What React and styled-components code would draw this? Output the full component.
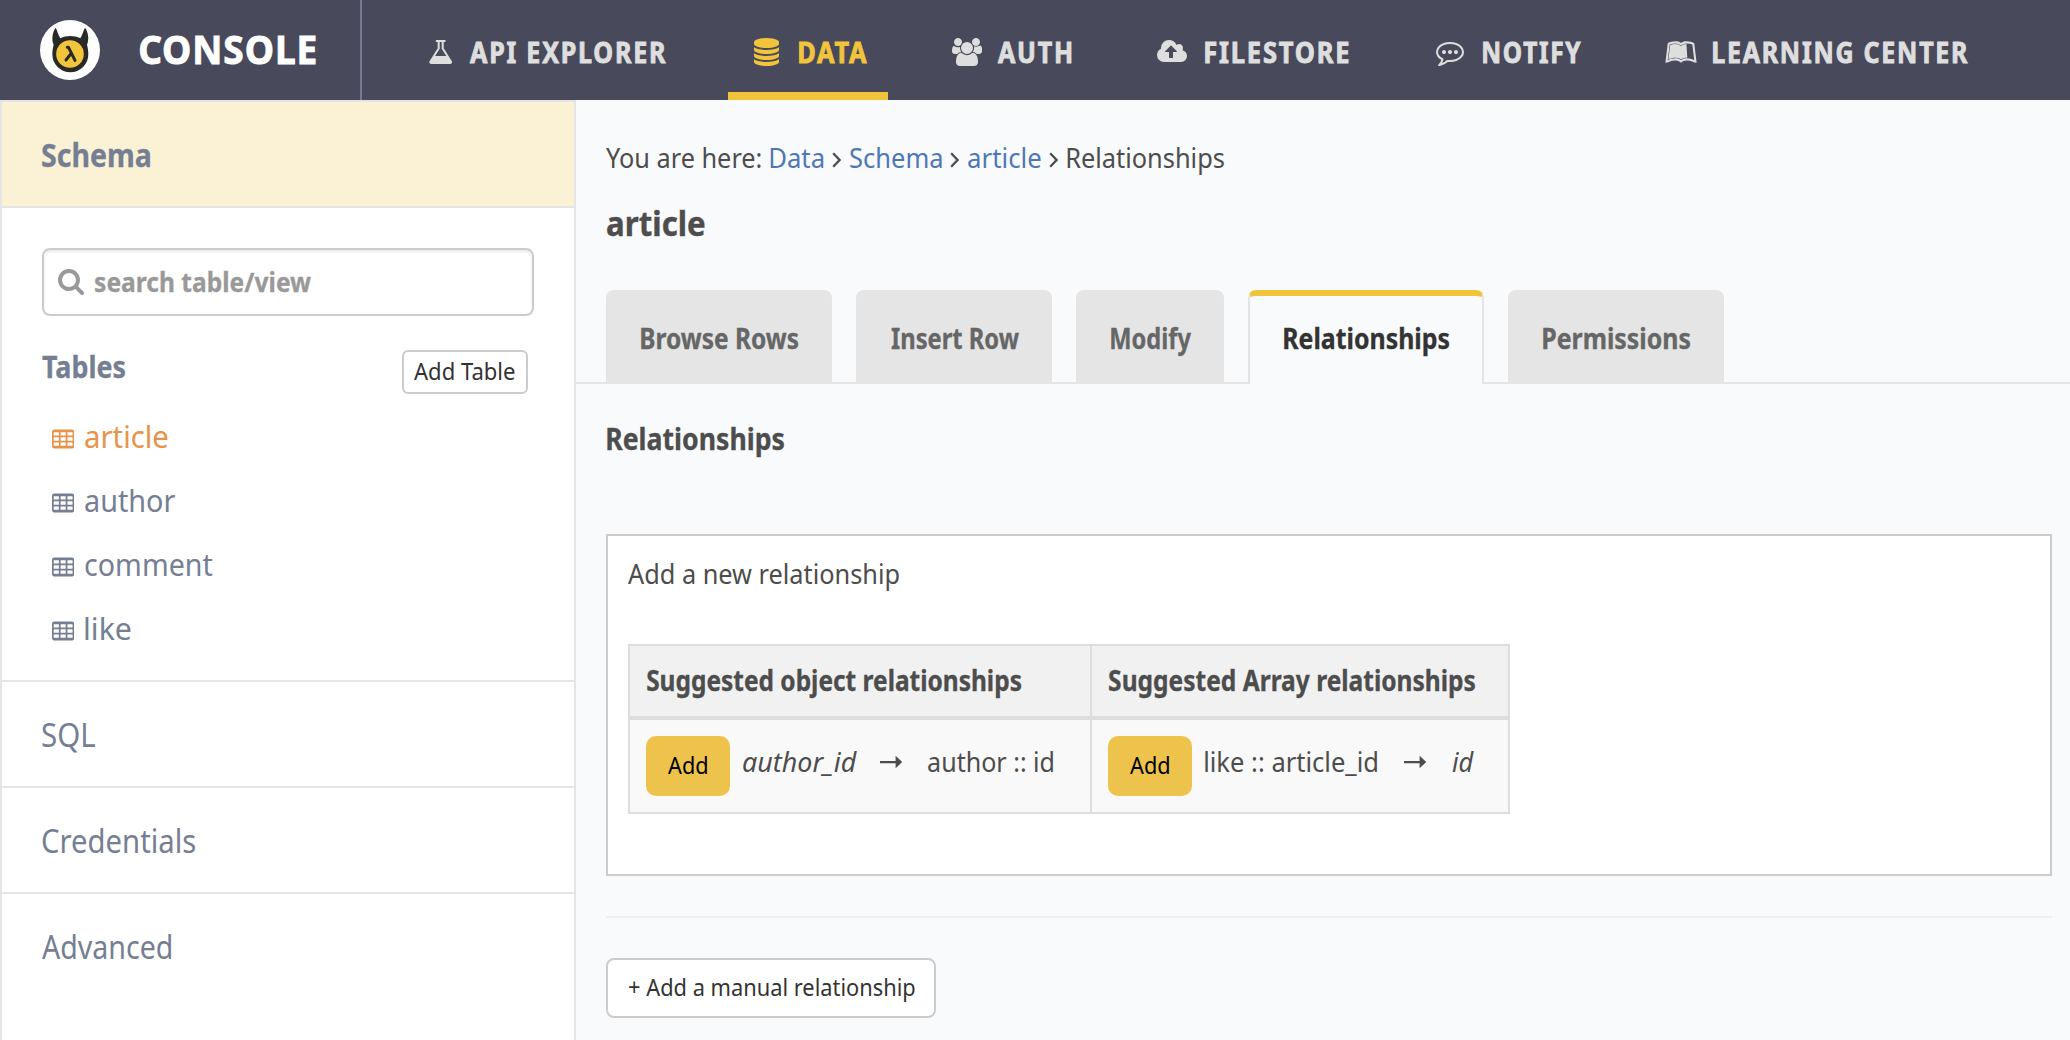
import React, { useLayoutEffect, useState } from "react";
import styled, { createGlobalStyle } from "styled-components";
import { FaLeanpub } from "react-icons/fa";

const FONT = '"Noto Sans", "Open Sans", sans-serif';

const GlobalStyle = createGlobalStyle`
  *, *::before, *::after { box-sizing: border-box; }
  html, body { margin: 0; padding: 0; }
  body {
    font-family: ${FONT};
    background: #f9fafc;
    color: #4d4d4d;
    overflow: hidden;
  }
`;

/* ---------- condensed text ---------- */

const FitBox = styled.span`
  display: block;
  flex: none;
  white-space: nowrap;
  font-size: ${(p) => p.$size}px;
  line-height: ${(p) => p.$line || 40}px;
  font-weight: ${(p) => (p.$bold ? 700 : 400)};
  font-style: ${(p) => (p.$italic ? "italic" : "normal")};
  letter-spacing: ${(p) => p.$spacing || 0}px;
  -webkit-text-stroke: ${(p) => p.$heavy || 0}px currentColor;
`;

const FitInner = styled.span`
  display: block;
  width: max-content;
  transform-origin: 0 50%;
`;

/* Squeezes a line of text so that its ink fills exactly `width` pixels. */
function Fit({ width, size = 28, line, bold, italic, heavy, spacing = 0, children }) {
  const [fit, setFit] = useState({ scale: 1, shift: 0 });
  useLayoutEffect(() => {
    const ctx = document.createElement("canvas").getContext("2d");
    ctx.font = `${italic ? "italic " : ""}${bold ? 700 : 400} ${size}px ${FONT}`;
    const m = ctx.measureText(children);
    const ink =
      m.actualBoundingBoxRight + m.actualBoundingBoxLeft + spacing * (children.length - 1);
    const scale = width / ink;
    setFit({ scale, shift: m.actualBoundingBoxLeft * scale });
  }, [width, size, bold, italic, spacing, children]);
  return (
    <FitBox
      $size={size}
      $line={line}
      $bold={bold}
      $italic={italic}
      $heavy={heavy}
      $spacing={spacing}
      style={{ width }}
    >
      <FitInner style={{ transform: `translateX(${fit.shift}px) scaleX(${fit.scale})` }}>
        {children}
      </FitInner>
    </FitBox>
  );
}

/* ---------- icons ---------- */

const Glyph = styled.svg`
  display: block;
  flex: none;
  fill: currentColor;
`;

const FlaskIcon = () => (
  <Glyph width="23.4" height="28" viewBox="148 0 1496 1792">
    <path d="M1591 1448q56 89 21.5 152.5t-140.5 63.5h-1152q-106 0-140.5-63.5t21.5-152.5l503-793v-399h-64q-26 0-45-19t-19-45 19-45 45-19h512q26 0 45 19t19 45-19 45-45 19h-64v399zm-779-725l-272 429h712l-272-429-20-31v-436h-128v436z" />
  </Glyph>
);

const DatabaseIcon = () => (
  <Glyph width="25" height="28" viewBox="128 0 1536 1792" preserveAspectRatio="none">
    <path d="M896 768q237 0 443-43t325-127v170q0 69-103 128t-280 93.5-385 34.5-385-34.5-280-93.5-103-128v-170q119 84 325 127t443 43zm0 768q237 0 443-43t325-127v170q0 69-103 128t-280 93.5-385 34.5-385-34.5-280-93.5-103-128v-170q119 84 325 127t443 43zm0-384q237 0 443-43t325-127v170q0 69-103 128t-280 93.5-385 34.5-385-34.5-280-93.5-103-128v-170q119 84 325 127t443 43zm0-1152q208 0 385 34.5t280 93.5 103 128v128q0 69-103 128t-280 93.5-385 34.5-385-34.5-280-93.5-103-128v-128q0-69 103-128t280-93.5 385-34.5z" />
  </Glyph>
);

const UsersIcon = () => (
  <Glyph width="30" height="28" viewBox="64 0 1920 1792">
    <path d="M657 896q-162 5-265 128h-134q-82 0-138-40.5t-56-118.5q0-353 124-353 6 0 43.5 21t97.5 42.5 119 21.5q67 0 133-23-5 37-5 66 0 159 93 296zm1071 637q0 120-73 189.5t-194 69.5h-874q-121 0-194-69.5t-73-189.5q0-53 3.5-103.5t14-109 26.5-108.5 43-97.5 62-81 85.5-53.5 111.5-20q10 0 43 21.5t73 48 107 48 135 21.5 135-21.5 107-48 73-48 43-21.5q61 0 111.5 20t85.5 53.5 62 81 43 97.5 26.5 108.5 14 109 3.5 103.5zm-1024-1277q0 106-75 181t-181 75-181-75-75-181 75-181 181-75 181 75 75 181zm704 384q0 159-112.5 271.5t-271.5 112.5-271.5-112.5-112.5-271.5 112.5-271.5 271.5-112.5 271.5 112.5 112.5 271.5zm576 225q0 78-56 118.5t-138 40.5h-134q-103-123-265-128 93-137 93-296 0-29-5-66 66 23 133 23 59 0 119-21.5t97.5-42.5 43.5-21q124 0 124 353zm-128-609q0 106-75 181t-181 75-181-75-75-181 75-181 181-75 181 75 75 181z" />
  </Glyph>
);

const CloudUploadIcon = () => (
  <Glyph width="30" height="28" viewBox="64 0 1920 1792">
    <path d="M1344 864q0-14-9-23l-352-352q-9-9-23-9t-23 9l-351 351q-10 12-10 24 0 14 9 23t23 9h224v352q0 13 9.5 22.5t22.5 9.5h192q13 0 22.5-9.5t9.5-22.5v-352h224q13 0 22.5-9.5t9.5-22.5zm640 288q0 159-112.5 271.5t-271.5 112.5h-1088q-185 0-316.5-131.5t-131.5-316.5q0-130 70-240t188-165q-2-30-2-43 0-212 150-362t362-150q156 0 285.5 87t188.5 231q71-62 166-62 106 0 181 75t75 181q0 76-41 138 130 31 213.5 135.5t83.5 238.5z" />
  </Glyph>
);

const CommentIcon = () => (
  <Glyph width="28" height="28" viewBox="0 0 1792 1792">
    <path d="M640 896q0 53-37.5 90.5t-90.5 37.5-90.5-37.5-37.5-90.5 37.5-90.5 90.5-37.5 90.5 37.5 37.5 90.5zm384 0q0 53-37.5 90.5t-90.5 37.5-90.5-37.5-37.5-90.5 37.5-90.5 90.5-37.5 90.5 37.5 37.5 90.5zm384 0q0 53-37.5 90.5t-90.5 37.5-90.5-37.5-37.5-90.5 37.5-90.5 90.5-37.5 90.5 37.5 37.5 90.5zm-512-512q-204 0-381.5 69.5t-282 187.5-104.5 255q0 112 71.5 213.5t201.5 175.5l87 50-27 96q-24 91-70 172 152-63 275-171l43-38 57 6q69 8 130 8 204 0 381.5-69.5t282-187.5 104.5-255-104.5-255-282-187.5-381.5-69.5zm896 512q0 174-120 321.5t-326 233-450 85.5q-70 0-145-8-198 175-460 242-49 14-114 22h-5q-15 0-27-10.5t-16-27.5v-1q-3-4-.5-12t2-10 4.5-9.5l6-9 7-8.5 8-9q7-8 31-34.5t34.5-38 31-39.5 32.5-51 27-59 26-76q-157-89-247.5-220t-90.5-281q0-174 120-321.5t326-233 450-85.5 450 85.5 326 233 120 321.5z" />
  </Glyph>
);

const SearchIcon = () => (
  <Glyph width="26" height="26" viewBox="64 128 1664 1664">
    <path d="M1216 832q0-185-131.5-316.5t-316.5-131.5-316.5 131.5-131.5 316.5 131.5 316.5 316.5 131.5 316.5-131.5 131.5-316.5zm512 832q0 52-38 90t-90 38q-54 0-90-38l-343-342q-179 124-399 124-143 0-273.5-55.5t-225-150-150-225-55.5-273.5 55.5-273.5 150-225 225-150 273.5-55.5 273.5 55.5 225 150 150 225 55.5 273.5q0 220-124 399l343 343q37 37 37 90z" />
  </Glyph>
);

const TABLE_CELLS = [1152, 768, 384]
  .flatMap((y) => [192, 704, 1216].map((x) => [x, y]))
  .map(
    ([x, y]) =>
      `M${x + 384} ${y + 224}v-192q0-14-9-23t-23-9h-320q-14 0-23 9t-9 23v192q0 14 9 23t23 9h320q14 0 23-9t9-23z`
  )
  .join("");

const TableIcon = () => (
  <Glyph width="22.3" height="24" viewBox="64 0 1664 1792">
    <path
      fillRule="evenodd"
      d={`M1728 352v1088q0 66-47 113t-113 47h-1344q-66 0-113-47t-47-113v-1088q0-66 47-113t113-47h1344q66 0 113 47t47 113z${TABLE_CELLS}`}
    />
  </Glyph>
);

const AngleIcon = () => (
  <svg width="9" height="16" viewBox="0 0 9 16">
    <polyline points="1.2,1.2 7.6,8 1.2,14.8" fill="none" stroke="currentColor" strokeWidth="2.3" />
  </svg>
);

const ArrowIcon = () => (
  <Glyph width="22" height="14" viewBox="0 0 22 14">
    <path d="M0 5.9h15.6V0.8L22.2 7l-6.6 6.2V8.2H0z" />
  </Glyph>
);

const LogoIcon = () => (
  <svg width="60" height="60" viewBox="30 30 180 180">
    <circle cx="120" cy="120" r="90" fill="#fff" />
    <path
      d="M77 53C67 66 64 88 71 104C69 112 67 122 67 133A54 54 0 0 0 175 133C175 122 173 112 171 104C178 88 175 66 165 53C160 61 158 74 151 85C132 76 110 76 91 85C84 74 82 61 77 53z"
      fill="#282a28"
    />
    <circle cx="120" cy="132" r="41.5" fill="#f1c43c" />
    <path
      d="M112 112h3.5L135 151M123 131L108 150"
      fill="none"
      stroke="#282a28"
      strokeWidth="9"
      strokeLinecap="round"
      strokeLinejoin="round"
    />
  </svg>
);

/* ---------- header ---------- */

const Header = styled.header`
  display: flex;
  height: 100px;
  background: #484a5b;
  color: #dedede;
`;

const Brand = styled.div`
  display: flex;
  align-items: center;
  gap: 40px;
  width: 362px;
  padding-left: 40px;
  border-right: 2px solid #757a92;
  color: #fff;
`;

const BrandName = styled.div`
  padding-bottom: 2px;
`;

const Nav = styled.nav`
  display: flex;
`;

const NavItem = styled.a`
  display: flex;
  align-items: center;
  height: 100px;
  margin-left: ${(p) => p.$gap}px;
  padding: 4px 21px 0 26px;
  color: ${(p) => (p.$active ? "#f1c43c" : "inherit")};
  box-shadow: ${(p) => (p.$active ? "inset 0 -8px 0 #f1c43c" : "none")};
`;

const NavIcon = styled.span`
  flex: none;
  width: ${(p) => p.$slot}px;
`;

const NavLabel = styled.span`
  padding-bottom: 1px;
`;

/* ---------- sidebar ---------- */

const Body = styled.div`
  display: flex;
  height: 940px;
`;

const Sidebar = styled.aside`
  flex: none;
  width: 576px;
  border: 2px solid #e5e5e5;
  border-bottom: 0;
  background: #fff;
  color: #767e93;
`;

const SideItem = styled.div`
  display: flex;
  align-items: center;
  height: ${(p) => (p.$active ? 106 : 104)}px;
  padding: 1px 0 0 40px;
  background: ${(p) => (p.$active ? "#fbf2d5" : "transparent")};
  border-bottom: ${(p) => (p.$active ? "2px solid #e5e5e5" : "0")};
`;

const SideSection = styled.div`
  border-top: 2px solid #e5e5e5;
`;

const SchemaPanel = styled.div`
  padding: 40px 40px 20px;
`;

const SearchField = styled.div`
  display: flex;
  align-items: center;
  gap: 11px;
  width: 492px;
  height: 68px;
  padding-left: 14px;
  border: 2px solid #ccc;
  border-radius: 8px;
  box-shadow: inset 0 2px 3px rgba(0, 0, 0, 0.09);
  color: #999;
`;

const TablesHead = styled.div`
  display: flex;
  justify-content: space-between;
  align-items: flex-start;
  margin-top: 34px;
  padding-right: 6px;
`;

const SmallButton = styled.button`
  display: flex;
  align-items: center;
  justify-content: center;
  width: 126px;
  height: 44px;
  padding: 0 1px 2px 0;
  border: 2px solid #ccc;
  border-radius: 6px;
  background: #fff;
  color: #333;
  font-family: inherit;
`;

const TableList = styled.ul`
  margin: 11px 0 0;
  padding: 0 0 0 10px;
  list-style: none;
`;

const TableRow = styled.li`
  display: flex;
  align-items: center;
  gap: 11px;
  height: 64px;
  color: ${(p) => (p.$active ? "#e8934a" : "inherit")};
  &:last-child { margin-bottom: -1px; }
`;

const TableGlyph = styled.span`
  padding-top: 3px;
`;

/* ---------- main ---------- */

const Main = styled.main`
  flex: 1;
  min-width: 0;
  padding-top: 37px;
`;

const Breadcrumb = styled.div`
  display: flex;
  align-items: center;
  padding-left: 30px;
`;

const Crumb = styled.a`
  margin-left: ${(p) => (p.$first ? 9 : 8.5)}px;
  color: ${(p) => (p.$link ? "#4e78b5" : "inherit")};
`;

const CrumbAngle = styled.span`
  display: flex;
  padding-top: 5px;
  margin-left: 8.5px;
`;

const Title = styled.h2`
  margin: 26px 0 46px 31px;
`;

const Tabs = styled.div`
  display: flex;
  gap: 24px;
  height: 94px;
  padding-left: 30px;
  border-bottom: 2px solid #e5e5e5;
`;

const Tab = styled.div`
  display: flex;
  align-items: center;
  justify-content: center;
  width: ${(p) => p.$width}px;
  height: ${(p) => (p.$active ? 94 : 92)}px;
  padding: ${(p) => (p.$active ? "0 0 5px 1px" : "3px 0 0 1px")};
  border-radius: 8px 8px 0 0;
  background: ${(p) => (p.$active ? "#f9fafc" : "#e5e5e5")};
  color: ${(p) => (p.$active ? "#333" : "#666")};
  border: solid #e5e5e5;
  border-width: ${(p) => (p.$active ? "6px 2px 0" : "0")};
  border-top-color: #f1c43c;
`;

const Content = styled.section`
  padding: 35px 18px 0 30px;
`;

const Heading = styled.h4`
  margin: 0;
  padding-left: 1px;
`;

const Card = styled.div`
  height: 342px;
  margin-top: 75px;
  padding: 17px 20px 0;
  border: 2px solid #ccc;
  background: #fff;
`;

const Suggestions = styled.table`
  width: 882px;
  margin-top: 51px;
  table-layout: fixed;
  border-collapse: separate;
  border-spacing: 0;
  border: 2px solid #ddd;
`;

const HeadCell = styled.th`
  width: ${(p) => p.$width}px;
  height: 74px;
  padding: 0 0 3px 17px;
  background: #f1f1f1;
  border-bottom: 4px solid #ddd;
  & + & { border-left: 2px solid #ddd; }
`;

const Cell = styled.td`
  height: 92px;
  padding: 16px 0 16px 16px;
  background: #f9f9f9;
  & + & { border-left: 2px solid #ddd; }
`;

const Relation = styled.div`
  display: flex;
`;

const AddButton = styled.button`
  display: flex;
  align-items: center;
  justify-content: center;
  width: 84px;
  height: 60px;
  margin-right: ${(p) => p.$after}px;
  padding: 0 2px 2px 0;
  border: 0;
  border-radius: 10px;
  background: #eec34b;
  color: #000;
  font-family: inherit;
`;

const ArrowSlot = styled.span`
  display: flex;
  align-items: center;
  height: 51px;
  margin: 0 ${(p) => p.$right}px 0 ${(p) => p.$left}px;
`;

const Rule = styled.hr`
  height: 2px;
  margin: 40px 0;
  border: 0;
  background: #eee;
`;

const ManualButton = styled(SmallButton)`
  width: 330px;
  height: 60px;
  padding: 0 0 2px 1px;
  border-radius: 8px;
`;

const LeanpubIcon = () => <Glyph as={FaLeanpub} size={32} />;

const NAV = [
  { label: "API EXPLORER", width: 196, slot: 41, gap: 40.5, Icon: FlaskIcon },
  { label: "DATA", width: 68, slot: 45, gap: 41.5, Icon: DatabaseIcon, active: true },
  { label: "AUTH", width: 73, slot: 46, gap: 38, Icon: UsersIcon },
  { label: "FILESTORE", width: 144, slot: 48, gap: 39, Icon: CloudUploadIcon },
  { label: "NOTIFY", width: 98, slot: 46.5, gap: 40, Icon: CommentIcon },
  { label: "LEARNING CENTER", width: 255, slot: 48.5, gap: 37, Icon: LeanpubIcon },
];

const TABLES = [
  { name: "article", width: 83, active: true },
  { name: "author", width: 90 },
  { name: "comment", width: 128 },
  { name: "like", width: 46 },
];

const SECTIONS = [
  { name: "SQL", width: 53 },
  { name: "Credentials", width: 153 },
  { name: "Advanced", width: 129 },
];

const TABS = [
  { name: "Browse Rows", width: 226, text: 157 },
  { name: "Insert Row", width: 196, text: 128 },
  { name: "Modify", width: 148, text: 80 },
  { name: "Relationships", width: 236, text: 165, active: true },
  { name: "Permissions", width: 216, text: 147 },
];

export default function App() {
  return (
    <>
      <GlobalStyle />
      <Header>
        <Brand>
          <LogoIcon />
          <BrandName>
            <Fit width={176} size={40} bold heavy={0.9} spacing={1}>CONSOLE</Fit>
          </BrandName>
        </Brand>
        <Nav>
          {NAV.map(({ label, width, slot, gap, Icon, active }) => (
            <NavItem key={label} $gap={gap} $active={active}>
              <NavIcon $slot={slot}><Icon /></NavIcon>
              <NavLabel>
                <Fit width={width} bold heavy={0.9} spacing={2}>{label}</Fit>
              </NavLabel>
            </NavItem>
          ))}
        </Nav>
      </Header>
      <Body>
        <Sidebar>
          <SideItem $active>
            <Fit width={108} size={32} bold heavy={0.3}>Schema</Fit>
          </SideItem>
          <SchemaPanel>
            <SearchField>
              <SearchIcon />
              <Fit width={216} size={27} bold heavy={0.3}>search table/view</Fit>
            </SearchField>
            <TablesHead>
              <Fit width={83} size={30} line={34} bold heavy={0.3}>Tables</Fit>
              <SmallButton>
                <Fit width={101} size={24}>Add Table</Fit>
              </SmallButton>
            </TablesHead>
            <TableList>
              {TABLES.map((t) => (
                <TableRow key={t.name} $active={t.active}>
                  <TableGlyph><TableIcon /></TableGlyph>
                  <Fit width={t.width} size={30}>{t.name}</Fit>
                </TableRow>
              ))}
            </TableList>
          </SchemaPanel>
          {SECTIONS.map((s) => (
            <SideSection key={s.name}>
              <SideItem>
                <Fit width={s.width} size={32}>{s.name}</Fit>
              </SideItem>
            </SideSection>
          ))}
        </Sidebar>
        <Main>
          <Breadcrumb>
            <Fit width={155}>You are here:</Fit>
            <Crumb $link $first><Fit width={53.5}>Data</Fit></Crumb>
            <CrumbAngle><AngleIcon /></CrumbAngle>
            <Crumb $link><Fit width={92}>Schema</Fit></Crumb>
            <CrumbAngle><AngleIcon /></CrumbAngle>
            <Crumb $link><Fit width={73}>article</Fit></Crumb>
            <CrumbAngle><AngleIcon /></CrumbAngle>
            <Crumb><Fit width={157.5}>Relationships</Fit></Crumb>
          </Breadcrumb>
          <Title><Fit width={97.5} size={34} line={41} bold heavy={0.4}>article</Fit></Title>
          <Tabs>
            {TABS.map((t) => (
              <Tab key={t.name} $width={t.width} $active={t.active}>
                <Fit width={t.text} bold heavy={0.3}>{t.name}</Fit>
              </Tab>
            ))}
          </Tabs>
          <Content>
            <Heading><Fit width={177} size={30} bold heavy={0.3}>Relationships</Fit></Heading>
            <Card>
              <Fit width={271}>Add a new relationship</Fit>
              <Suggestions>
                <thead>
                  <tr>
                    <HeadCell $width={460}>
                      <Fit width={374} bold heavy={0.3}>Suggested object relationships</Fit>
                    </HeadCell>
                    <HeadCell $width={418}>
                      <Fit width={366} bold heavy={0.3}>Suggested Array relationships</Fit>
                    </HeadCell>
                  </tr>
                </thead>
                <tbody>
                  <tr>
                    <Cell>
                      <Relation>
                        <AddButton $after={13}><Fit width={39} size={24}>Add</Fit></AddButton>
                        <Fit width={114} line={51} italic>author_id</Fit>
                        <ArrowSlot $left={23} $right={26}><ArrowIcon /></ArrowSlot>
                        <Fit width={125} line={51}>author :: id</Fit>
                      </Relation>
                    </Cell>
                    <Cell>
                      <Relation>
                        <AddButton $after={13}><Fit width={39} size={24}>Add</Fit></AddButton>
                        <Fit width={172} line={51}>like :: article_id</Fit>
                        <ArrowSlot $left={27} $right={26}><ArrowIcon /></ArrowSlot>
                        <Fit width={22} line={51} italic>id</Fit>
                      </Relation>
                    </Cell>
                  </tr>
                </tbody>
              </Suggestions>
            </Card>
            <Rule />
            <ManualButton>
              <Fit width={286} size={24}>+ Add a manual relationship</Fit>
            </ManualButton>
          </Content>
        </Main>
      </Body>
    </>
  );
}
